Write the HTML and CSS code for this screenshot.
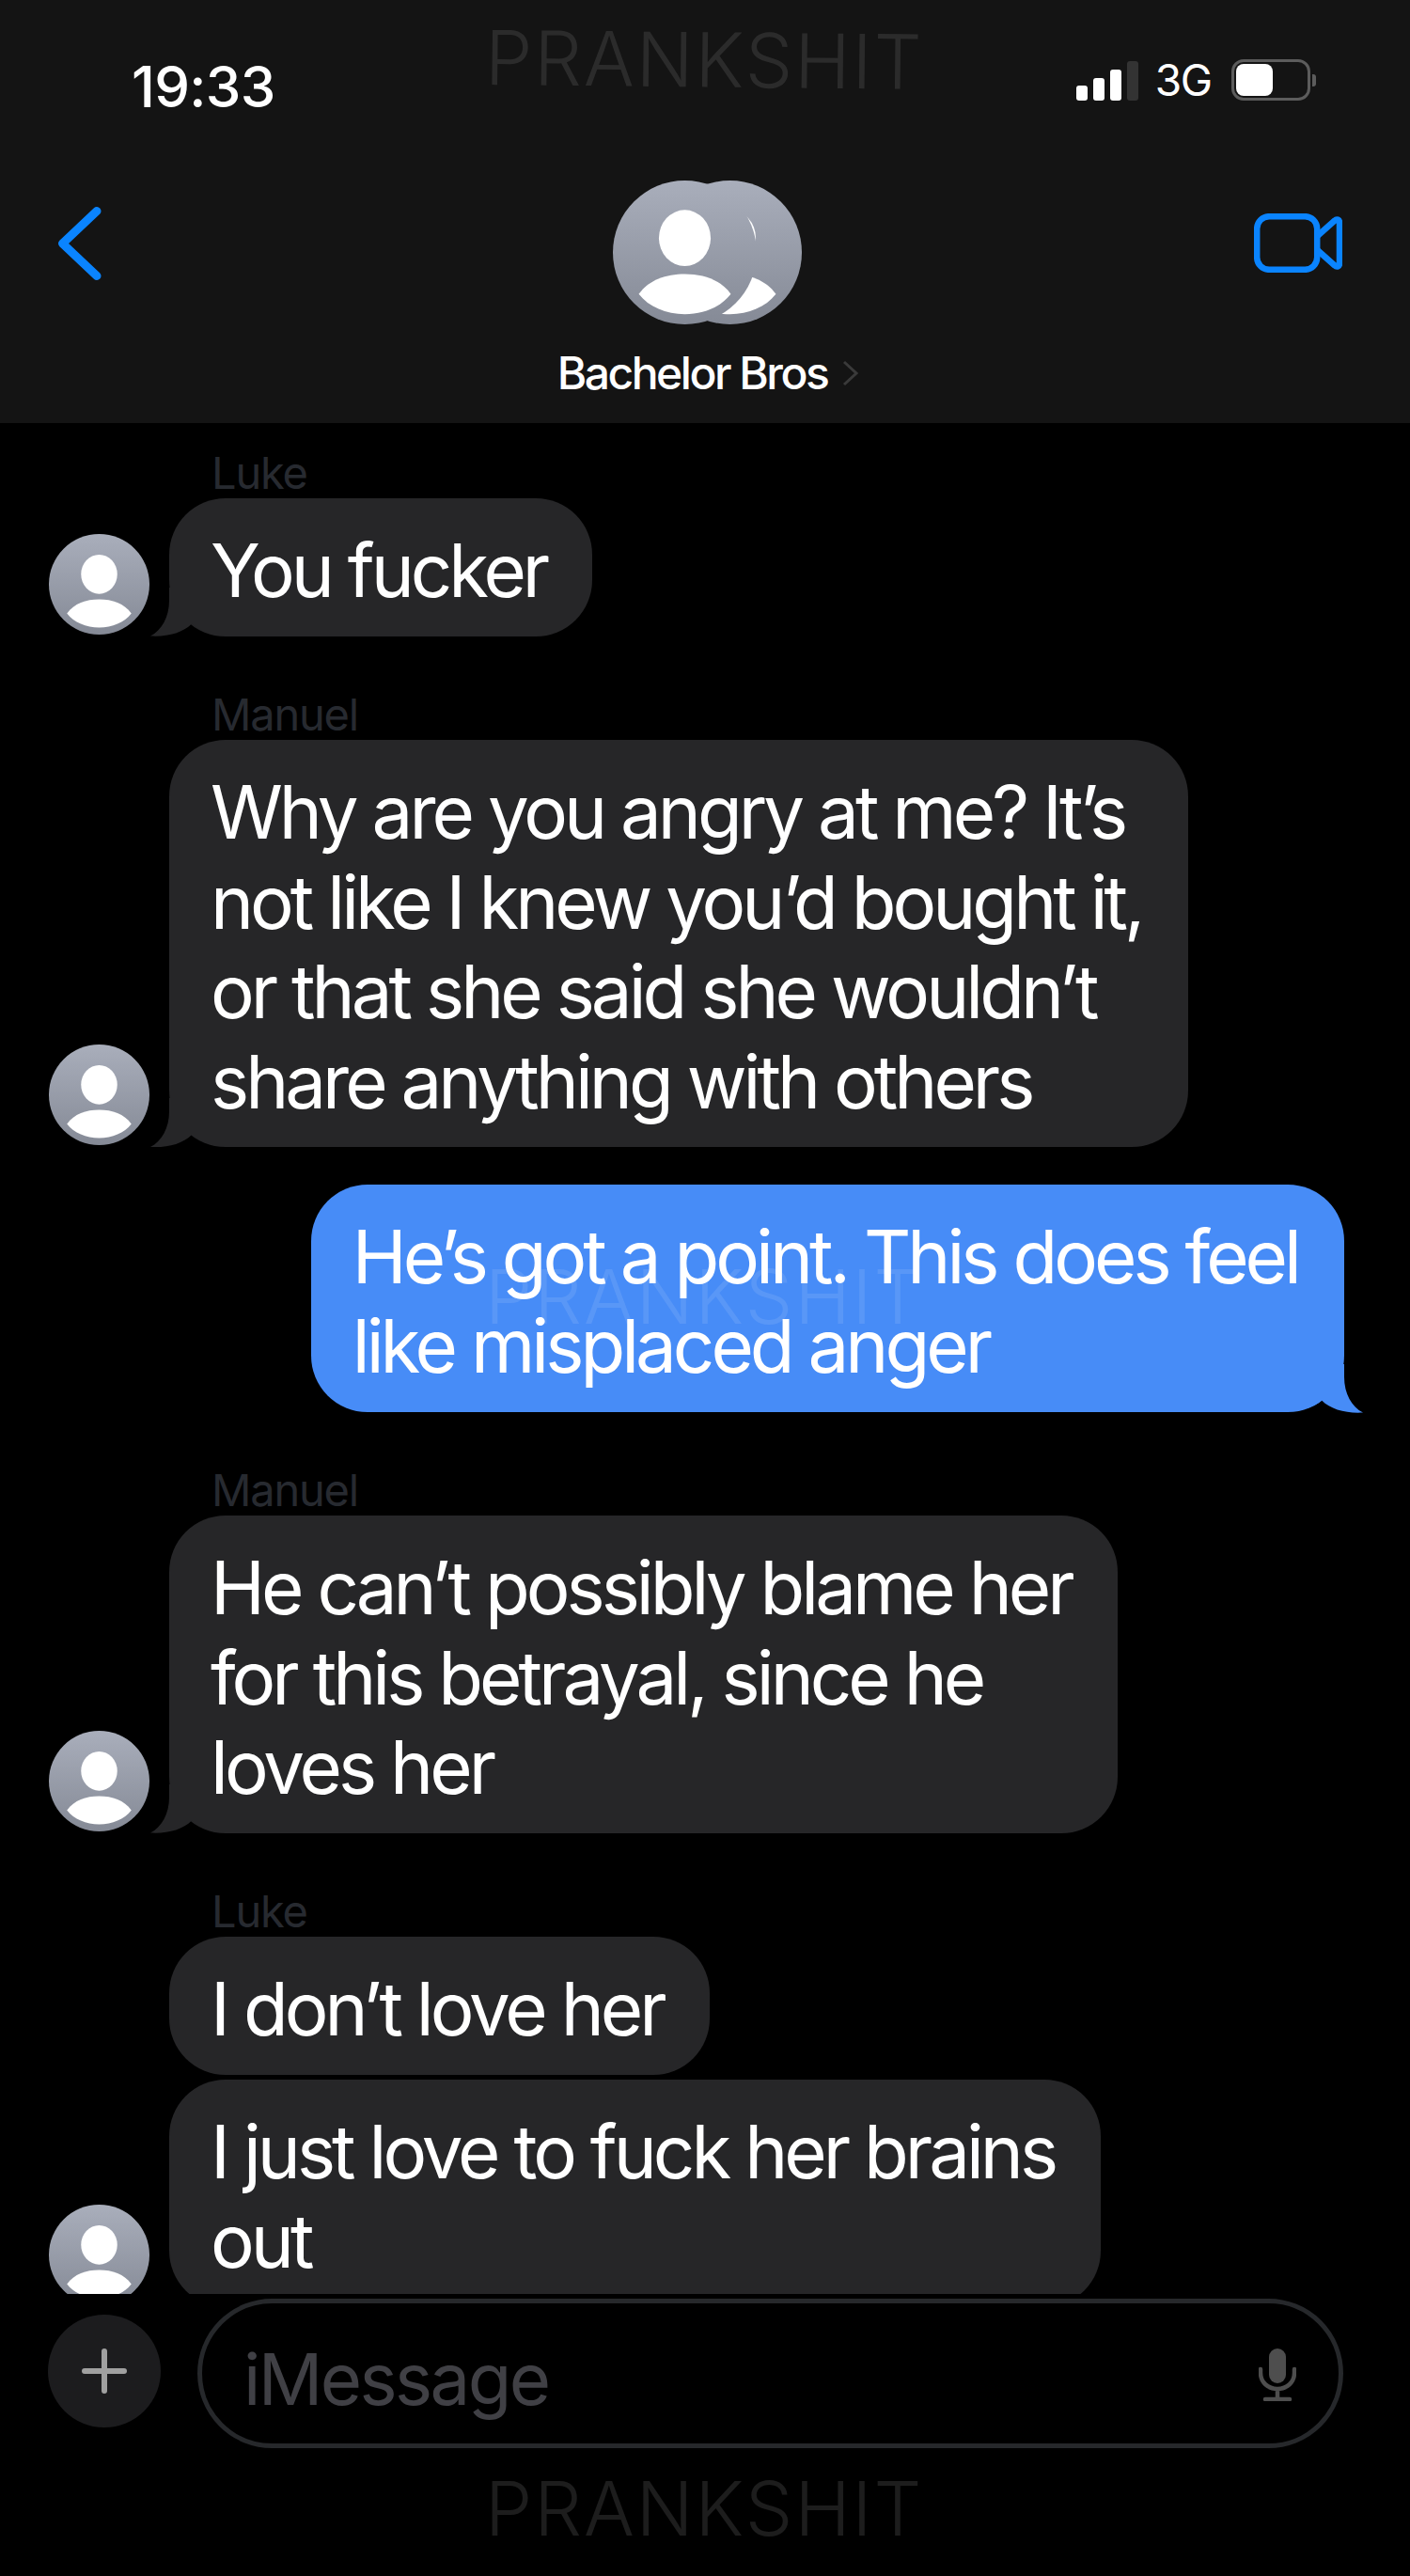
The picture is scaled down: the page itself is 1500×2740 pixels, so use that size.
FILE: index.html
```html
<!DOCTYPE html>
<html lang="en">
<head>
<meta charset="utf-8">
<title>Bachelor Bros</title>
<link rel="stylesheet" href="styles.css">
</head>
<body>
<svg class="defs" width="0" height="0" aria-hidden="true">
  <defs>
    <linearGradient id="avatarFill" x1="0" y1="0" x2="0" y2="1">
      <stop offset="0" stop-color="#a9aebb"/>
      <stop offset="1" stop-color="#858a96"/>
    </linearGradient>
    <symbol id="person" viewBox="0 0 100 100">
      <circle cx="50" cy="50" r="50" fill="url(#avatarFill)"/>
      <ellipse cx="50" cy="40" rx="18" ry="19.500" fill="#fff"/>
      <path d="M18 79C25 69 37 65 50 65C63 65 75 69 82 79C75 88 63 93 50 93C37 93 25 88 18 79Z" fill="#fff"/>
    </symbol>
  </defs>
</svg>
<div class="phone">
  <header class="nav">
    <div class="status">
      <span class="time">19:33</span>
      <div class="status-right">
        <div class="signal"><i class="bar b1"></i><i class="bar b2"></i><i class="bar b3"></i><i class="bar b4"></i></div>
        <span class="net">3G</span>
        <div class="battery"><i class="level"></i></div>
        <i class="nub"></i>
      </div>
    </div>
    <div class="nav-row">
      <svg class="back" viewBox="0 0 46 78"><path d="M41 4.500L4.500 39L41 73.500"/></svg>
      <div class="group">
        <svg class="group-pic back-pic" viewBox="0 0 100 100"><use href="#person"/></svg>
        <svg class="group-pic front-pic" viewBox="0 0 100 100"><use href="#person"/></svg>
      </div>
      <svg class="video" viewBox="0 0 94 63"><rect x="3.200" y="3.200" width="64" height="56.600" rx="13"/><path d="M67.500 24L86 7.500C88 5.500 91 6.500 91 9.500V53.500C91 56.500 88 57.500 86 55.500L67.500 39"/></svg>
    </div>
    <div class="title"><span>Bachelor Bros</span><svg class="title-chev" viewBox="0 0 18 28"><path d="M2 2L15 14L2 26"/></svg></div>
  </header>

  <main class="thread">
    <section class="turn first">
      <div class="sender">Luke</div>
      <div class="row">
        <svg class="avatar" viewBox="0 0 100 100"><use href="#person"/></svg>
        <div class="bubble in tailed">You fucker</div>
      </div>
    </section>
    <section class="turn">
      <div class="sender">Manuel</div>
      <div class="row">
        <svg class="avatar" viewBox="0 0 100 100"><use href="#person"/></svg>
        <div class="bubble in tailed">Why are you angry at me? It’s<br>not like I knew you’d bought it,<br>or that she said she wouldn’t<br>share anything with others</div>
      </div>
    </section>
    <section class="turn mine">
      <div class="bubble out">He’s got a point. This does feel<br>like misplaced anger</div>
    </section>
    <section class="turn">
      <div class="sender">Manuel</div>
      <div class="row">
        <svg class="avatar" viewBox="0 0 100 100"><use href="#person"/></svg>
        <div class="bubble in tailed">He can’t possibly blame her<br>for this betrayal, since he<br>loves her</div>
      </div>
    </section>
    <section class="turn">
      <div class="sender">Luke</div>
      <div class="row plain">
        <div class="bubble in">I don’t love her</div>
      </div>
      <div class="row stacked">
        <svg class="avatar" viewBox="0 0 100 100"><use href="#person"/></svg>
        <div class="bubble in">I just love to fuck her brains<br>out</div>
      </div>
    </section>
  </main>

  <footer class="composer">
    <div class="plus"><svg viewBox="0 0 48 48"><path d="M24 3V45M3 24H45"/></svg></div>
    <div class="pill">
      <span class="placeholder">iMessage</span>
      <svg class="mic" viewBox="0 0 40 56"><rect x="11" y="0" width="18" height="37" rx="9"/><path class="mic-line" d="M2 22V26C2 36 10 43 20 43C30 43 38 36 38 26V22M20 43V52M7 54H33"/></svg>
    </div>
  </footer>

  <div class="mark mark-top">PRANKSHIT</div>
  <div class="mark mark-mid">PRANKSHIT</div>
  <div class="mark mark-bottom">PRANKSHIT</div>
</div>
</body>
</html>
```
FILE: styles.css
```css
* { box-sizing: border-box; }
html, body { margin: 0; background: #000; }
.defs { position: absolute; }
.phone {
  position: relative;
  width: 1500px;
  height: 2740px;
  overflow: hidden;
  background: #000;
  color: #fff;
  font-family: Inter, "Liberation Sans", sans-serif;
}

/* nav */
.nav { height: 451px; background: #141414; border-bottom: 1px solid #000; }
.status {
  display: flex;
  justify-content: space-between;
  align-items: flex-start;
  padding: 58px 100px 0 140px;
  height: 192px;
}
.time { font-size: 60px; font-weight: 500; line-height: 68px; letter-spacing: -0.7px; }
.status-right { display: flex; align-items: center; margin-top: 5px; height: 44px; }
.signal { display: flex; align-items: flex-end; gap: 6px; height: 43px; }
.bar { display: block; width: 12px; background: #fff; border-radius: 3px; }
.b1 { height: 16px; }
.b2 { height: 24px; }
.b3 { height: 33px; }
.b4 { height: 42px; background: #333; }
.net { font-size: 46px; line-height: 44px; margin: 0 21px 0 18px; letter-spacing: -1.2px; }
.battery { width: 84px; height: 44px; border: 3px solid #5c5c5c; border-radius: 13px; padding: 2px; }
.level { display: block; width: 39px; height: 100%; background: #fff; border-radius: 8px; }
.nub { display: block; width: 4px; height: 13px; margin-left: 2px; background: #5c5c5c; border-radius: 0 3px 3px 0; }

.nav-row {
  display: flex;
  justify-content: space-between;
  align-items: flex-start;
  padding: 0 72px 0 62px;
  height: 175px;
}
.back { width: 46px; height: 78px; margin-top: 28px; fill: none; stroke: #0a84ff; stroke-width: 9; stroke-linecap: round; stroke-linejoin: round; }
.group { display: flex; width: 201px; margin-left: 63px; }
.group-pic { width: 153px; height: 153px; display: block; }
.back-pic { order: 2; margin-left: -105px; }
.front-pic { order: 1; position: relative; z-index: 1; }
.video { width: 94px; height: 63px; margin-top: 35px; fill: none; stroke: #0a84ff; stroke-width: 6.500; stroke-linejoin: round; }

.title {
  display: flex;
  align-items: center;
  justify-content: center;
  gap: 16px;
  font-size: 48px;
  font-weight: 500;
  line-height: 60px;
  margin-left: 7px;
  letter-spacing: -2.500px;
}
.title-chev { width: 18px; height: 28px; fill: none; stroke: #3a3a3a; stroke-width: 3; }

/* thread */
.thread { height: 1989px; overflow: hidden; padding-top: 25px; }
.turn { margin-top: 56.500px; }
.turn.first { margin-top: 0; }
.turn.mine { margin-top: 39.500px; display: flex; justify-content: flex-end; padding-right: 70px; }
.sender { padding-left: 225px; font-size: 47px; line-height: 54px; color: #272a30; letter-spacing: -1.2px; }
.row { display: flex; align-items: flex-end; padding-left: 52px; }
.row.plain { padding-left: 180px; }
.row.stacked { margin-top: 5px; }
.avatar { width: 107px; height: 107px; flex: none; margin-bottom: 2px; }
.bubble {
  position: relative;
  padding: 29px 49px 22px 44px;
  border-radius: 60px;
  font-size: 78px;
  line-height: 95.500px;
  letter-spacing: -4px;
  white-space: nowrap;
}
.bubble.in { background: #262628; }
.row .avatar + .bubble { margin-left: 21px; }
.bubble.out { background: #478cf7; }
.bubble.tailed::before {
  content: "";
  position: absolute;
  left: -20px;
  bottom: 0;
  width: 62px;
  height: 52px;
  background: #262628;
  clip-path: path("M20 0V14C20 32 12 46 0 52C18 53 34 49 44 39C48 43 54 46 62 48V0Z");
}
.bubble.out::after {
  content: "";
  position: absolute;
  right: -20px;
  bottom: -1px;
  width: 62px;
  height: 52px;
  background: #478cf7;
  clip-path: path("M42 0V14C42 32 50 46 62 52C44 53 28 49 18 39C14 43 8 46 0 48V0Z");
}

/* composer */
.composer { display: flex; align-items: flex-start; padding: 5px 71px 0 51px; gap: 39px; }
.plus { width: 120px; height: 120px; margin-top: 17px; border-radius: 50%; background: #1c1c1e; display: flex; align-items: center; justify-content: center; flex: none; }
.plus svg { width: 48px; height: 48px; fill: none; stroke: #a0a0a0; stroke-width: 6; stroke-linecap: round; }
.pill {
  flex: 1;
  height: 159px;
  border: 5px solid #26282b;
  border-radius: 80px;
  display: flex;
  align-items: center;
  justify-content: space-between;
  padding: 0 45px 0 44px;
}
.placeholder { font-size: 76px; line-height: 96px; color: #404045; letter-spacing: -2.600px; margin-top: 10px; }
.mic { width: 40px; height: 56px; margin-top: 2px; fill: #4e4e4e; }
.mic-line { fill: none; stroke: #4e4e4e; stroke-width: 4.500; stroke-linecap: round; }

/* watermarks */
.mark {
  position: absolute;
  left: 516px;
  font-size: 80px;
  line-height: 96px;
  font-weight: 300;
  letter-spacing: 2px;
  white-space: nowrap;
  pointer-events: none;
}
.mark-top { top: 13px; color: rgba(255,255,255,0.1); transform: rotate(0.6deg); transform-origin: left center; }
.mark-mid { top: 1331px; color: rgba(255,255,255,0.1); }
.mark-bottom { top: 2620px; color: rgba(255,255,255,0.115); }
```
